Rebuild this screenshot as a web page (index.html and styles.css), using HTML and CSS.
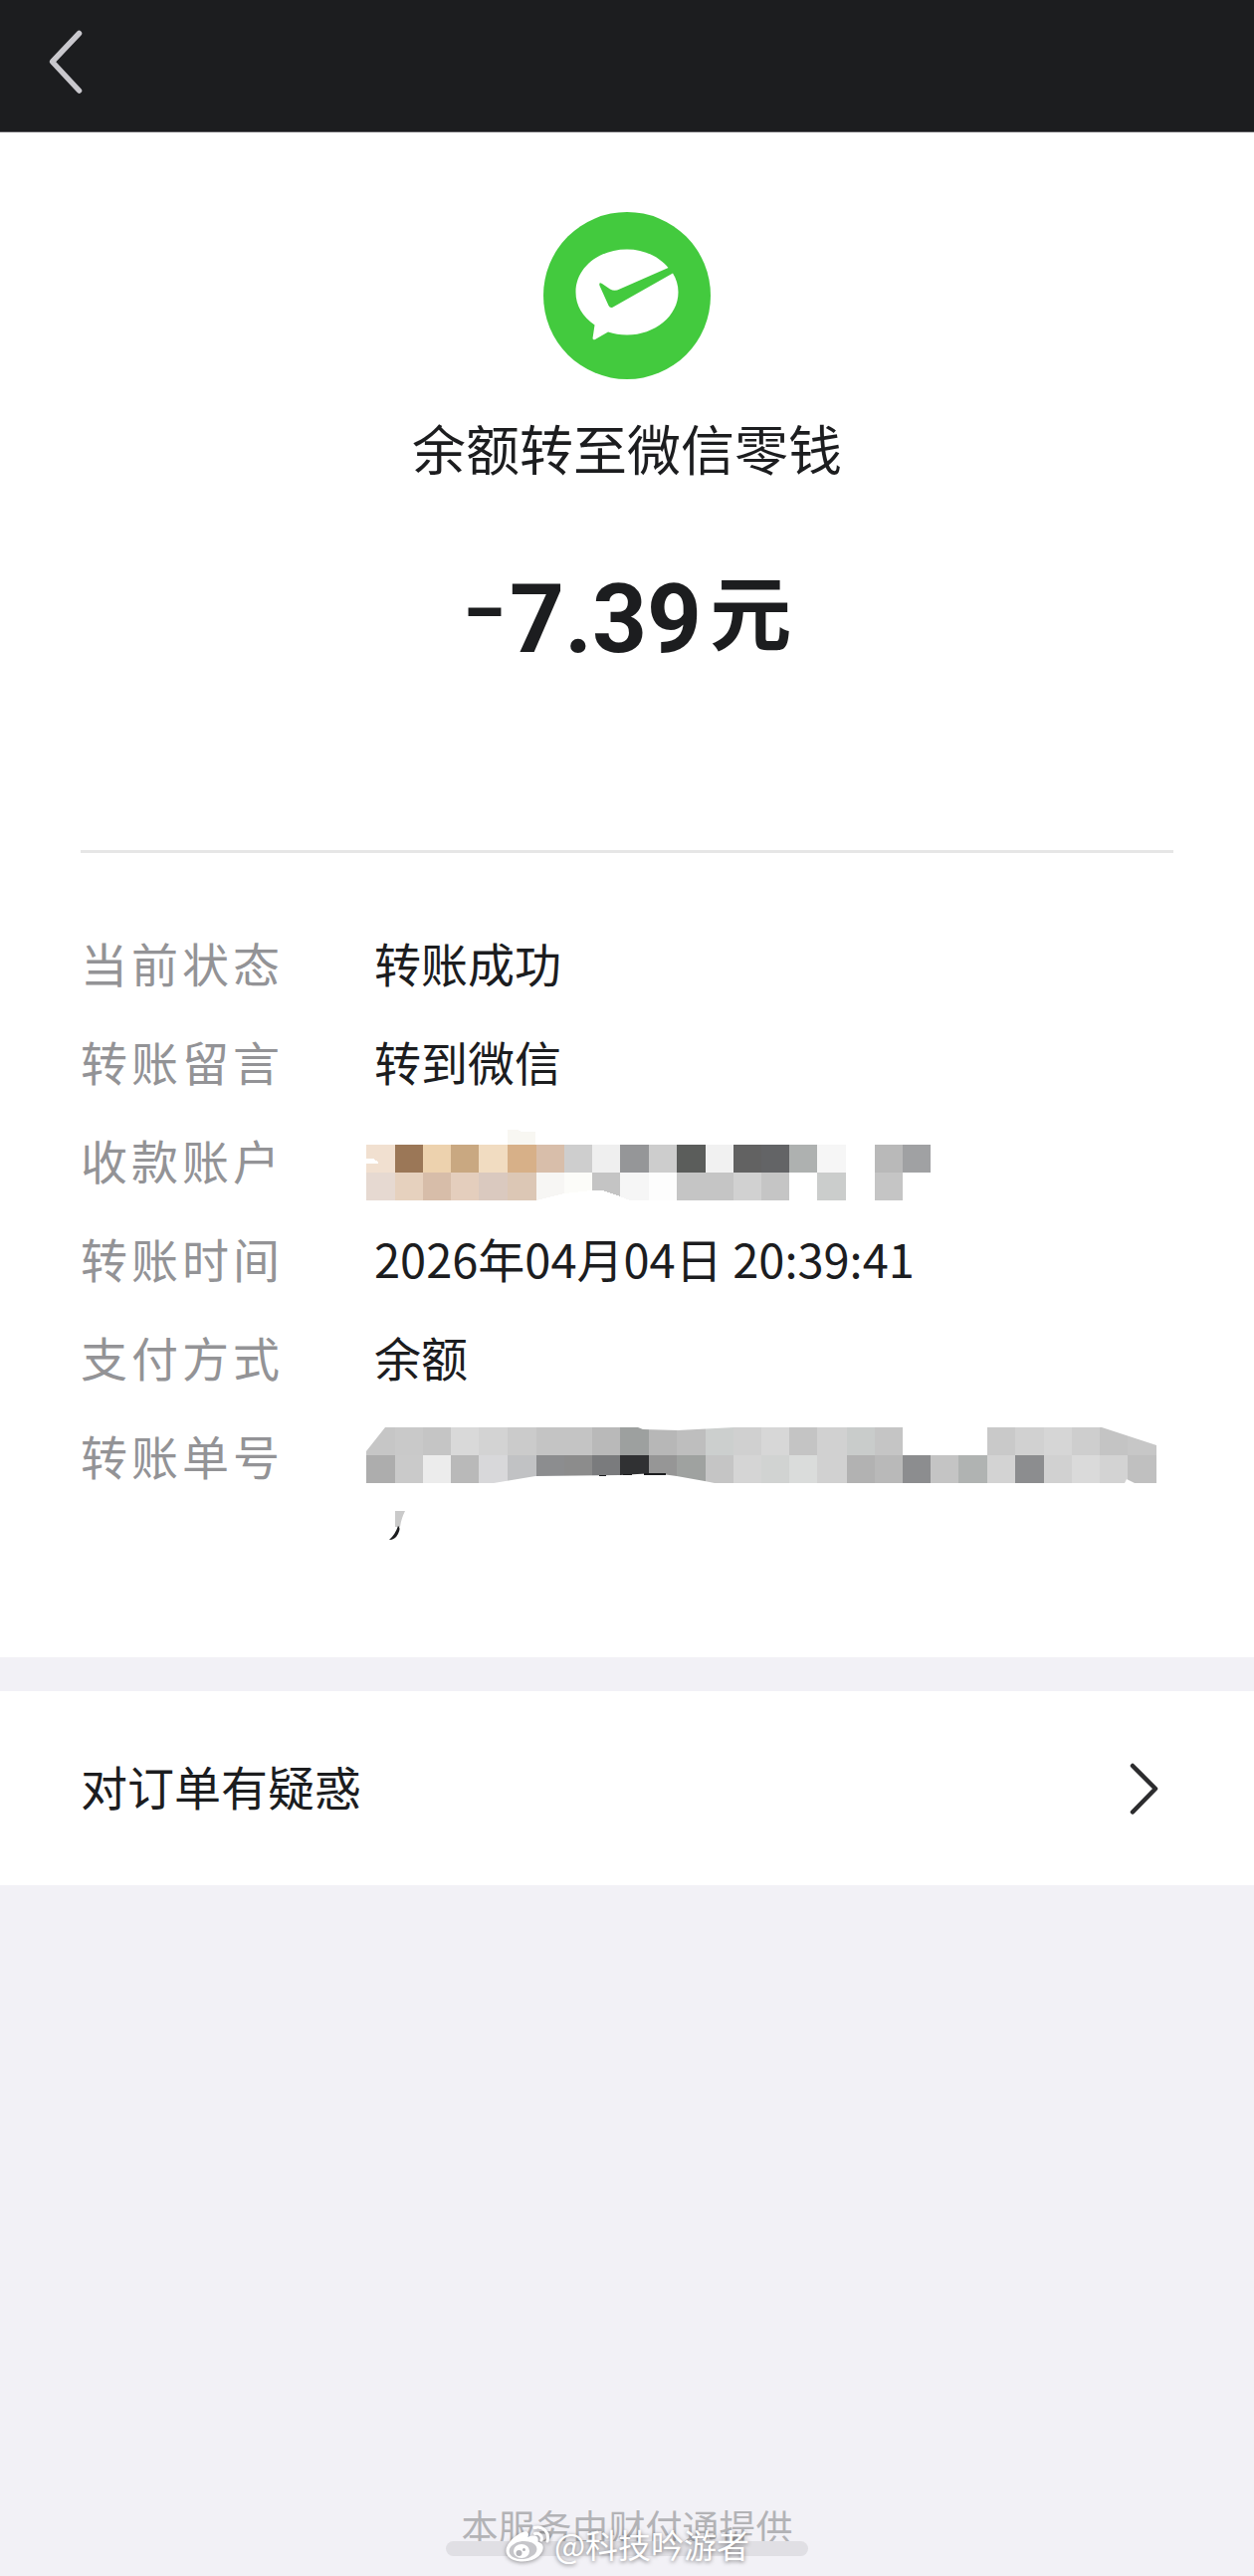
FILE: index.html
```html
<!DOCTYPE html>
<html lang="zh-CN">
<head>
<meta charset="utf-8">
<meta name="viewport" content="width=device-width, initial-scale=1">
<title>账单详情</title>
<link rel="stylesheet" href="styles.css">
</head>
<body>
<div class="page">
  <header class="navbar">
    <button class="back" type="button" aria-label="返回">
      <svg width="36" height="66" viewBox="0 0 36 66" fill="none" stroke="#c9c8cd" stroke-width="5.5" stroke-linecap="round" stroke-linejoin="round"><path d="M31.500 4.500 4.500 33 31.500 62"/></svg>
    </button>
  </header>

  <main>
    <section class="card bill">
      <div class="summary">
        <svg class="logo" viewBox="0 0 168 168" aria-hidden="true">
          <circle cx="84" cy="84" r="84" fill="#43ca3e"/>
          <path fill="#fff" d="M84 37.500C55.500 37.500 32.500 56 32.500 80.500C32.500 94 39.500 105.500 51.500 113.500L49.500 127Q50 129 52 128L65 120.500C71 122.500 77 123.500 84 123.500C112 123.500 135.500 104.500 135.500 80.500C135.500 73.500 133.500 67 130 61.500L70 95.500Q67 97 65.500 94L56.500 74Q55.500 70 59 72L67 77.500Q71.500 80 76.500 77.500L125.500 56C116 44.500 101 37.500 84 37.500Z"/>
        </svg>
        <h1 class="title">余额转至微信零钱</h1>
        <p class="amount"><span class="minus">−</span>7.39<span class="unit">元</span></p>
      </div>

      <dl class="details">
        <div class="row"><dt>当前状态</dt><dd>转账成功</dd></div>
        <div class="row"><dt>转账留言</dt><dd>转到微信</dd></div>
        <div class="row"><dt>收款账户</dt><dd>
          <svg class="mosaic" width="567" height="82" viewBox="0 -26 567 82" shape-rendering="crispEdges" role="img" aria-label="已打码">
            <path fill="#f8f7f2" d="M142-15h10l4 2h14V0h-28z"/>
            <path fill="#f1e0d0" d="M0 0h29v28H0z"/><path fill="#9b7757" d="M29 0h28v28H29z"/><path fill="#edd2ae" d="M57 0h28v28H57z"/><path fill="#c9a881" d="M85 0h28v28H85z"/><path fill="#f1dcc1" d="M113 0h29v28h-29z"/><path fill="#d7b088" d="M142 0h29v28h-29z"/><path fill="#d8beaa" d="M171 0h28v28h-28z"/><path fill="#cecece" d="M199 0h28v28h-28z"/><path fill="#efefef" d="M227 0h28v28h-28z"/><path fill="#959698" d="M255 0h29v28h-29z"/><path fill="#cdcdcd" d="M284 0h28v28h-28z"/><path fill="#5b5d5b" d="M312 0h29v28h-29z"/><path fill="#f1f1f1" d="M341 0h28v28h-28z"/><path fill="#626262" d="M369 0h28v28h-28z"/><path fill="#636466" d="M397 0h28v28h-28z"/><path fill="#aeb1b0" d="M425 0h28v28h-28z"/><path fill="#f6f6f6" d="M453 0h29v28h-29z"/><path fill="#b9b9b9" d="M511 0h28v28h-28z"/><path fill="#a0a1a3" d="M539 0h28v28h-28z"/>
            <path fill="#e6d9d1" d="M0 28h29v28H0z"/><path fill="#e6d1be" d="M29 28h28v28H29z"/><path fill="#d7bda9" d="M57 28h28v28H57z"/><path fill="#e4cebd" d="M85 28h28v28H85z"/><path fill="#dac9bf" d="M113 28h29v28h-29z"/><path fill="#dcc7b5" d="M142 28h29v28h-29z"/><path fill="#f7f6f4" d="M171 28h28v21l-28 7z"/><path fill="#fcfcf9" d="M199 28h28v18l-28 3z"/><path fill="#c4c4c4" d="M227 28h28v24l-18-6h-10z"/><path fill="#f6f6f6" d="M255 28h29v28h-19l-10-4z"/><path fill="#fdfdfd" d="M284 28h28v28h-28z"/><path fill="#c5c5c5" d="M312 28h57v28h-57z"/><path fill="#d1d1d1" d="M369 28h28v28h-28z"/><path fill="#c5c5c5" d="M397 28h28v28h-28z"/><path fill="#cbcdcc" d="M453 28h29v28h-29z"/><path fill="#c5c5c5" d="M511 28h28v28h-28z"/>
            <path fill="#fff" d="M0 14h7l5 3v2H0z"/>
          </svg></dd></div>
        <div class="row"><dt>转账时间</dt><dd>2026年04月04日 20:39:41</dd></div>
        <div class="row"><dt>支付方式</dt><dd>余额</dd></div>
        <div class="row"><dt>转账单号</dt><dd>
          <svg class="mosaic" width="794" height="56" viewBox="0 0 794 56" overflow="visible" shape-rendering="crispEdges" role="img" aria-label="已打码">
            <clipPath id="edge"><path d="M0 24 19 0H273L278 2 313 3 370 0H739L794 18V56H772L764 52 762 56H350L340 54 312 49 290 46 255 48 170 49 140 54 128 56H0z"/></clipPath>
            <g clip-path="url(#edge)">
              <path fill="#c6c6c6" d="M0 0h29v28H0z"/><path fill="#c9c9c9" d="M29 0h28v28H29z"/><path fill="#c5c5c5" d="M57 0h28v28H57z"/><path fill="#d9d9d9" d="M85 0h28v28H85z"/><path fill="#d3d3d3" d="M113 0h29v28h-29z"/><path fill="#cbcbcb" d="M142 0h29v28h-29z"/><path fill="#c4c4c4" d="M171 0h56v28h-56z"/><path fill="#b9b9b9" d="M227 0h28v28h-28z"/><path fill="#9da09f" d="M255 0h29v28h-29z"/><path fill="#b7b7b7" d="M284 0h28v28h-28z"/><path fill="#bebebe" d="M312 0h29v28h-29z"/><path fill="#cccfce" d="M341 0h28v28h-28z"/><path fill="#d0d0d0" d="M369 0h28v28h-28z"/><path fill="#d7d7d7" d="M397 0h28v28h-28z"/><path fill="#c4c4c4" d="M425 0h28v28h-28z"/><path fill="#d1d1d1" d="M453 0h30v28h-30z"/><path fill="#c9cccb" d="M483 0h28v28h-28z"/><path fill="#c5c5c5" d="M511 0h28v28h-28z"/><path fill="#c9c9c9" d="M624 0h28v28h-28z"/><path fill="#d1d1d1" d="M652 0h29v28h-29z"/><path fill="#d6d6d6" d="M681 0h28v28h-28z"/><path fill="#cecece" d="M709 0h28v28h-28z"/><path fill="#c4c4c4" d="M737 0h28v28h-28z"/><path fill="#c7c7c7" d="M765 0h29v28h-29z"/>
              <path fill="#adadad" d="M0 28h29v28H0z"/><path fill="#cacaca" d="M29 28h28v28H29z"/><path fill="#ececec" d="M57 28h28v28H57z"/><path fill="#b9b9b9" d="M85 28h28v28H85z"/><path fill="#d8d8da" d="M113 28h29v28h-29z"/><path fill="#c1c2c4" d="M142 28h29v28h-29z"/><path fill="#8c8d8f" d="M171 28h28v28h-28z"/><path fill="#8c8c8c" d="M199 28h28v28h-28z"/><path fill="#7a7b7d" d="M227 28h28v28h-28z"/><path fill="#303133" d="M255 28h29v28h-29z"/><path fill="#969696" d="M284 28h28v28h-28z"/><path fill="#9fa2a0" d="M312 28h29v28h-29z"/><path fill="#c5c5c5" d="M341 28h28v28h-28z"/><path fill="#d5d5d5" d="M369 28h28v28h-28z"/><path fill="#d1d3d2" d="M397 28h28v28h-28z"/><path fill="#dadcdb" d="M425 28h28v28h-28z"/><path fill="#d1d1d1" d="M453 28h30v28h-30z"/><path fill="#b2b2b2" d="M483 28h28v28h-28z"/><path fill="#b9b9b9" d="M511 28h28v28h-28z"/><path fill="#8c8d8f" d="M539 28h28v28h-28z"/><path fill="#c4c4c4" d="M567 28h28v28h-28z"/><path fill="#b0b3b2" d="M595 28h29v28h-29z"/><path fill="#d3d3d3" d="M624 28h28v28h-28z"/><path fill="#8c8d8f" d="M652 28h29v28h-29z"/><path fill="#d1d1d1" d="M681 28h28v28h-28z"/><path fill="#dadada" d="M709 28h28v28h-28z"/><path fill="#d3d3d3" d="M737 28h28v28h-28z"/><path fill="#c0c0c0" d="M765 28h29v28h-29z"/>
            </g>
            <path fill="#1c1d1f" d="M279 46h22v2h-22zM234 48h7v1h-7zM257 47h11l-3 1h-6z"/>
            <g shape-rendering="auto"><path fill="#cacaca" d="M29 84h10q-4 8-5 16h-5z"/><path fill="#1c1d1f" d="M32 99q3 2 0 8-3 6-9 6 6-5 9-14z"/></g>
          </svg></dd></div>
      </dl>
    </section>

    <a class="card help" href="#">
      <span>对订单有疑惑</span>
      <svg width="30" height="56" viewBox="0 0 30 56" fill="none" stroke="#2c2c2e" stroke-width="4.500" stroke-linecap="round" stroke-linejoin="round" aria-hidden="true"><path d="M3 5 26 28 3 51.500"/></svg>
    </a>
  </main>

  <footer class="footer">
    <p class="provider">本服务由财付通提供</p>
    <div class="home-bar"></div>
    <div class="watermark">
      <svg width="46" height="38" viewBox="0 0 46 38" aria-hidden="true">
        <path fill="#fff" d="M18 7C23 5 25 8 23.500 12C29 9.500 35 10 33.500 16.500C38 18 40 21 38 26C35 33 26 37 16 36.500C7 36 1 31 1.500 25C2 18 11 9.500 18 7Z"/>
        <ellipse cx="18.500" cy="25" rx="14" ry="9" fill="#c6c6ca" transform="rotate(-7 18.500 25)"/>
        <ellipse cx="17" cy="26" rx="8" ry="7" fill="#fff"/>
        <circle cx="14.500" cy="28" r="3" fill="#b5b5ba"/><circle cx="19.500" cy="24.500" r="1.500" fill="#b5b5ba"/>
        <path fill="none" stroke="#fff" stroke-width="3" stroke-linecap="round" d="M30 2.500C39 0 45.500 8 43 16M30.500 8.500C35 7.500 38.500 11 37 15"/>
      </svg>
      <span>@科技吟游者</span>
    </div>
  </footer>
</div>
</body>
</html>
```
FILE: styles.css
```css
* {
  box-sizing: border-box;
}

body,
h1,
p,
dl,
dd {
  margin: 0;
}

body {
  background: #f2f1f6;
  color: #1c1d1f;
  font-family: "Noto Sans CJK SC", sans-serif;
  font-size: 47px;
}

.page {
  display: flex;
  flex-direction: column;
  min-height: 100vh;
}

.navbar {
  display: flex;
  align-items: center;
  height: 133px;
  padding: 0 48px 8px;
  background: #1c1d1f;
  border-bottom: 1px solid #5c5c60;
}

.back {
  display: flex;
  padding: 0;
  border: 0;
  background: none;
  cursor: pointer;
}

.card {
  background: #fff;
  padding: 0 81px;
}

.summary {
  display: flex;
  flex-direction: column;
  align-items: center;
  padding: 80px 0 172px;
  border-bottom: 3px solid #e6e6e6;
}

.logo {
  width: 168px;
  height: 168px;
}

.title {
  margin-top: 34px;
  font-size: 54px;
  font-weight: 400;
  line-height: 70px;
}

.amount {
  display: flex;
  align-items: flex-start;
  margin-top: 77px;
  font-family: Roboto, "Noto Sans CJK SC", sans-serif;
  font-size: 96px;
  font-weight: 700;
  line-height: 120px;
}

.minus {
  margin-right: 4px;
  font-size: 78px;
  line-height: 108px;
}

.unit {
  margin-left: 8px;
  font-family: "Noto Sans CJK SC", sans-serif;
  font-size: 82px;
  line-height: 100px;
}

.details {
  padding: 60px 0 154px;
}

.row {
  display: grid;
  grid-template-columns: 295px 1fr;
  align-items: center;
  height: 99px;
  white-space: nowrap;
}

.row dt {
  color: #939396;
  letter-spacing: 4px;
}

.mosaic {
  display: block;
  margin-left: -8px;
}

.help {
  display: flex;
  align-items: center;
  justify-content: space-between;
  height: 195px;
  margin-top: 34px;
  padding-right: 95px;
  color: inherit;
  text-decoration: none;
}

.help span {
  padding-bottom: 6px;
}

.footer {
  position: relative;
  margin-top: auto;
  padding-bottom: 20px;
  text-align: center;
}

.provider {
  color: #b3b3b6;
  font-size: 37px;
  line-height: 60px;
}

.home-bar {
  position: absolute;
  bottom: 20px;
  left: 50%;
  width: 364px;
  height: 15px;
  margin-left: -182px;
  border-radius: 8px;
  background: #e0dfe4;
}

.watermark {
  position: absolute;
  right: 0;
  bottom: 10px;
  left: 0;
  display: flex;
  align-items: center;
  justify-content: center;
  gap: 4px;
  color: #fff;
  font-size: 33px;
  line-height: 44px;
  text-shadow: 0 1px 4px rgba(0, 0, 0, 0.5);
}

.watermark svg {
  filter: drop-shadow(0 1px 2px rgba(0, 0, 0, 0.4));
}
```
